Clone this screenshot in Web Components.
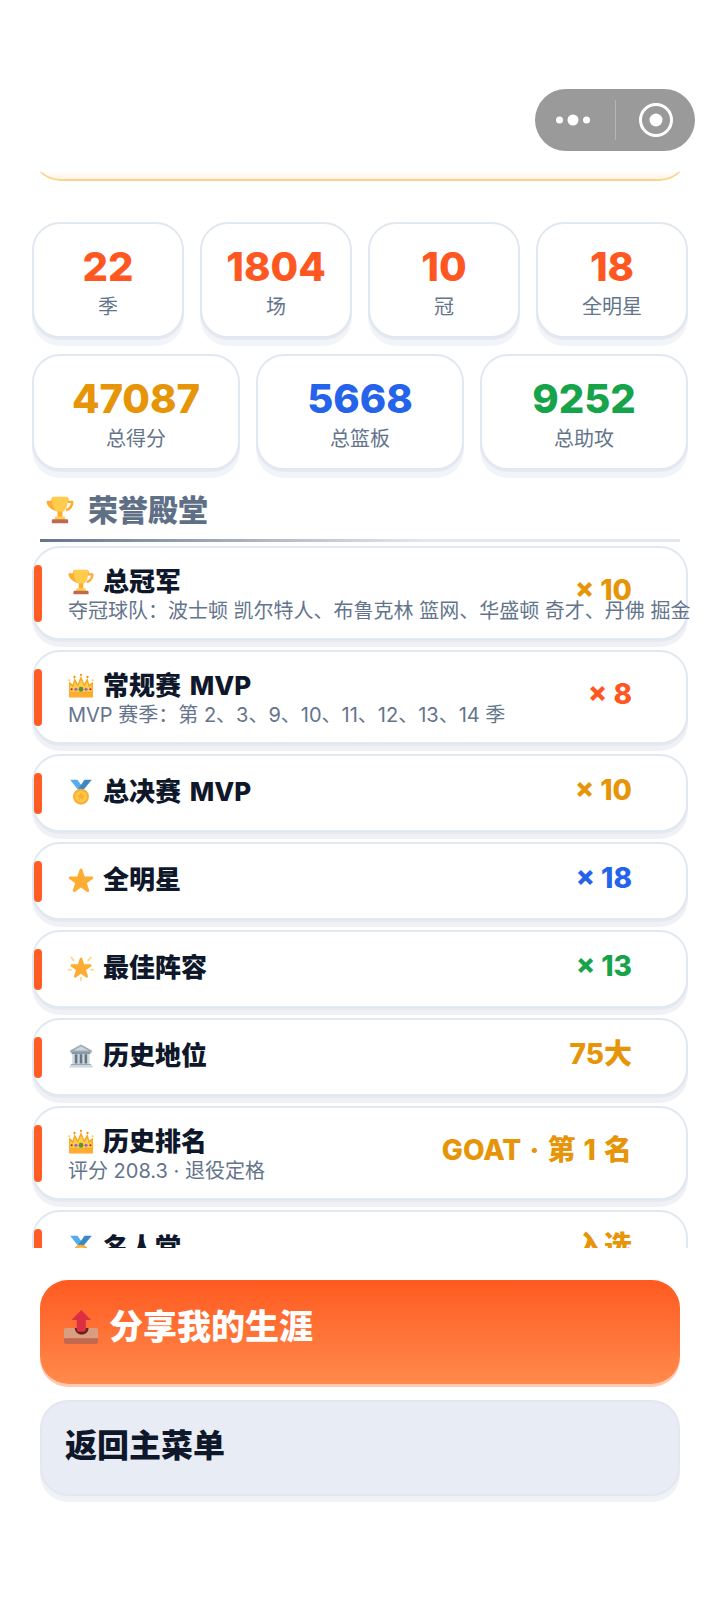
<!DOCTYPE html>
<html lang="zh"><head><meta charset="utf-8"><title>生涯</title>
<style>
html,body{margin:0;padding:0;background:#fff}
body{width:720px;height:1600px;overflow:hidden;font-family:Inter,"Noto Sans CJK SC",sans-serif}
</style></head><body>
<career-page>
  <capsule-menu slot="overlay"></capsule-menu>
  <hero-tail></hero-tail>
  <stat-grid cols="4" style="margin-top:41px">
    <stat-card value="22" label="季" color="#ff5722"></stat-card>
    <stat-card value="1804" label="场" color="#ff5722"></stat-card>
    <stat-card value="10" label="冠" color="#ff5722"></stat-card>
    <stat-card value="18" label="全明星" color="#ff5722"></stat-card>
  </stat-grid>
  <stat-grid cols="3" style="margin-top:16px">
    <stat-card value="47087" label="总得分" color="#e69508"></stat-card>
    <stat-card value="5668" label="总篮板" color="#2563eb"></stat-card>
    <stat-card value="9252" label="总助攻" color="#16a34a"></stat-card>
  </stat-grid>
  <section-heading text="荣誉殿堂"></section-heading>
  <honor-list>
    <honor-row icon="trophy" name="总冠军" value="× 10" color="#e69508" sub="夺冠球队：波士顿 凯尔特人、布鲁克林 篮网、华盛顿 奇才、丹佛 掘金"></honor-row>
    <honor-row icon="crown" name="常规赛 MVP" value="× 8" color="#ff5722" sub="MVP 赛季：第 2、3、9、10、11、12、13、14 季"></honor-row>
    <honor-row icon="medal" name="总决赛 MVP" value="× 10" color="#e69508"></honor-row>
    <honor-row icon="star" name="全明星" value="× 18" color="#2563eb"></honor-row>
    <honor-row icon="glow" name="最佳阵容" value="× 13" color="#16a34a"></honor-row>
    <honor-row icon="bank" name="历史地位" value="75大" color="#e69508"></honor-row>
    <honor-row icon="crown" name="历史排名" value="GOAT · 第 1 名" color="#e69508" wide sub="评分 208.3 · 退役定格"></honor-row>
    <honor-row icon="medal" name="名人堂" value="入选" color="#e69508"></honor-row>
  </honor-list>
  <action-button slot="footer" kind="primary" icon="outbox" text="分享我的生涯"></action-button>
  <action-button slot="footer" kind="secondary" text="返回主菜单"></action-button>
</career-page>
<script>
const STAR='M27.287 34.627c-.404 0-.806-.124-1.152-.371L18 28.422l-8.135 5.834c-.693.496-1.623.496-2.312-.008-.689-.499-.979-1.385-.721-2.194l3.034-9.792-8.062-5.681c-.685-.505-.97-1.393-.708-2.203.264-.808 1.016-1.357 1.866-1.363L12.947 13l3.179-9.549c.268-.809 1.023-1.353 1.874-1.353.851 0 1.606.545 1.875 1.353L23 13l10.036.015c.853.006 1.606.556 1.867 1.363.263.81-.022 1.698-.708 2.203l-8.062 5.681 3.034 9.792c.26.809-.033 1.695-.72 2.194-.347.254-.753.379-1.16.379z';
const ICONS={
trophy:`<path d="M7 3h22v3h4.500c1 0 2 .8 1.900 2-.3 4.500-3 11-9.400 11.500l-.5-3c3.500-.5 6-4 6.500-7.500H8.500c.5 3.500 3 7 6.500 7.500l-.5 3C8 19 1 12.500.7 8 .6 6.800 1.500 6 2.500 6H7z" fill="#ffac33"/><path d="M8 1h20c.6 6-.5 17-7 19.500v6h-6v-6C8.500 18 7.400 7 8 1z" fill="#ffcc4d"/><path d="M15 20h6v8h-6z" fill="#ffac33"/><path d="M12 26.500h12l1 4H11z" fill="#ffcc4d"/><path d="M9 30h18c1 0 1.500.8 1.500 1.800V35h-21v-3.200C7.500 30.800 8 30 9 30z" fill="#c1694f"/>`,
crown:`<path d="M1.500 12l5 4 2.500-9 4.500 8L18 4l4.500 11L27 7l2.500 9 5-4v21h-33z" fill="#f4a91f"/><path d="M3 16l4 4 2.500-8 4 7L18 9l4.500 10 4-7 2.500 8 4-4v10H3z" fill="#ffcc4d"/><path d="M1.500 27h33v7h-33z" fill="#ffac33"/><circle cx="1.800" cy="10" r="1.500" fill="#ffcc4d"/><circle cx="9" cy="5.500" r="1.600" fill="#f4900c"/><circle cx="18" cy="2.500" r="1.600" fill="#f4900c"/><circle cx="27" cy="5.500" r="1.600" fill="#f4900c"/><circle cx="34.200" cy="10" r="1.500" fill="#ffcc4d"/><circle cx="18" cy="22.500" r="3.300" fill="#5c913b"/><circle cx="11" cy="22.500" r="2.100" fill="#9266cc"/><circle cx="25" cy="22.500" r="2.100" fill="#9266cc"/><circle cx="5" cy="22.500" r="1.500" fill="#be1931"/><circle cx="31" cy="22.500" r="1.500" fill="#be1931"/>`,
medal:`<path d="M3 1h10l8 11-4 7z" fill="#55acee"/><path d="M33 1H23l-8 11 3 7z" fill="#3b88c3"/><path d="M13 15h10v6H13z" fill="#ffac33"/><circle cx="18" cy="24.500" r="11" fill="#ffac33"/><circle cx="18" cy="24.500" r="8" fill="#ffcc4d"/><path d="M18 18.500l1.800 4 4.200.3-3.200 2.800 1 4.200-3.800-2.300-3.800 2.300 1-4.200-3.200-2.800 4.200-.3z" fill="#ffac33"/>`,
star:`<path d="${STAR}" fill="#ffac33"/>`,
glow:`<g fill="#ffd983"><path d="M3 3.500l2-1.600 4.500 5.600-2 1.600zM33 3.500l-2-1.600-4.500 5.600 2 1.600zM0 21.500l.2-2.500 5 .4-.2 2.500zM36 21.500l-.2-2.500-5 .4.2 2.500zM16.800 30.500h2.400V36h-2.400z"/></g><g transform="translate(18 17.500) scale(.86) translate(-18 -18.500)"><path d="${STAR}" fill="#ffac33"/></g>`,
bank:`<path d="M18 2L3 10.500V13h30v-2.500z" fill="#99aab5"/><path d="M18 4.500L7.500 10.500h21z" fill="#ccd6dd"/><path d="M5 13h26v2H5z" fill="#66757f"/><path d="M6 15h24v14H6z" fill="#ccd6dd"/><path d="M9.500 15.500h3.500v13H9.500zM16.250 15.500h3.500v13h-3.500zM23 15.500h3.500v13H23z" fill="#66757f"/><path d="M4 29h28v2H4z" fill="#99aab5"/><path d="M2 31h32v3H2z" fill="#ccd6dd"/>`,
outbox:`<path d="M2 19h32c1.100 0 2 .9 2 2v9H0v-9c0-1.100.9-2 2-2z" fill="#d99e82"/><path d="M0 30h36v4c0 1.100-.9 2-2 2H2c-1.100 0-2-.9-2-2z" fill="#c1694f"/><path d="M11.500 19h14.500c0 4-3.200 7-7.250 7s-7.250-3-7.250-7z" fill="#662113"/><path d="M18.300 0L8 10.600h5.500V21c0 1.200.8 2 1.800 2h6c1 0 1.800-.8 1.800-2V10.600h5.500z" fill="#dd2e44"/>`
};
class AppIcon extends HTMLElement{
  static get observedAttributes(){return['name'];}
  constructor(){super();const r=this.attachShadow({mode:'open'});r.innerHTML=`<style>:host{display:inline-flex;flex:none}svg{display:block;width:100%;height:100%}</style><svg viewBox="0 0 36 36" aria-hidden="true"></svg>`;}
  attributeChangedCallback(){this.shadowRoot.querySelector('svg').innerHTML=ICONS[this.getAttribute('name')]||'';}
}
customElements.define('app-icon',AppIcon);
function define(name,html,extra){
  const t=document.createElement('template');t.innerHTML=html;
  customElements.define(name,class extends HTMLElement{
    constructor(){super();this.attachShadow({mode:'open'}).appendChild(t.content.cloneNode(true));}
    connectedCallback(){if(extra)extra(this,this.shadowRoot);}
  });
}
define('career-page',`<style>
:host{display:block;position:relative;width:720px;height:1600px;background:#fff;overflow:hidden}
.wrap{display:flex;flex-direction:column;height:1600px}
.scroll{margin-top:150px;height:1098px;overflow:hidden;flex:none;padding:0 32px;box-sizing:border-box}
.foot{display:flex;flex-direction:column;gap:16px;padding:32px 40px 0}
</style><div class="wrap"><div class="scroll"><slot></slot></div><div class="foot"><slot name="footer"></slot></div></div><slot name="overlay"></slot>`);
define('capsule-menu',`<style>
:host{position:absolute;left:535px;top:89px;width:160px;height:62px;display:block}
.c{height:100%;border-radius:31px;background:#9a9a9a;display:flex;align-items:center}
svg{display:block}
.l{width:80px;box-sizing:border-box;display:flex;justify-content:center;padding-right:4px}
.s{width:1px;height:40px;background:#b5b5b5}
.r{flex:1;display:flex;justify-content:center}
</style><div class="c"><div class="l"><svg width="36" height="14" viewBox="0 0 36 14"><circle cx="4.500" cy="7" r="3.500" fill="#fff"/><circle cx="18" cy="7" r="5.500" fill="#fff"/><circle cx="31.500" cy="7" r="3.500" fill="#fff"/></svg></div><div class="s"></div><div class="r"><svg width="36" height="36" viewBox="0 0 36 36"><circle cx="18" cy="18" r="15.500" fill="none" stroke="#fff" stroke-width="3"/><circle cx="18" cy="18" r="6.500" fill="#fff"/></svg></div></div>`);
define('hero-tail',`<style>
:host{display:block;height:31px;box-sizing:border-box;border:2px solid #fbd18e;border-top:0;border-radius:0 0 28px 28px;background:linear-gradient(#fff calc(100% - 7px),#fff3e0);-webkit-mask-image:linear-gradient(transparent 21px,#000 23px);mask-image:linear-gradient(transparent 21px,#000 23px)}
</style>`);
define('stat-grid',`<style>:host{display:grid;gap:16px}</style><slot></slot>`,(h)=>{h.style.gridTemplateColumns=`repeat(${h.getAttribute('cols')},1fr)`;});
define('stat-card',`<style>
:host{display:flex;flex-direction:column;align-items:center;height:116px;box-sizing:border-box;background:#fff;border:2px solid #e2e8f0;border-radius:28px;box-shadow:0 2px 0 #e5e9f0,0 8px 0 #f1f4f8;padding-top:19px}
.v{font-size:40px;font-weight:800;line-height:48px}
.l{font-size:20px;line-height:28px;color:#64748b;margin-top:2px}
</style><div class="v"></div><div class="l"></div>`,(h,s)=>{const v=s.querySelector('.v');v.textContent=h.getAttribute('value');v.style.color=h.getAttribute('color');s.querySelector('.l').textContent=h.getAttribute('label');});
define('section-heading',`<style>
:host{display:block;margin:12px 8px 0}
.t{display:flex;align-items:center;height:56px;padding:0 0 1px 6px}
app-icon{width:28px;height:28px;margin-right:14px}
span{font-size:30px;font-weight:800;color:#5f6f86;line-height:40px}
.d{height:3px;background:linear-gradient(90deg,#64748b,#e2e8f0 60%,#e2e8f0)}
</style><div class="t"><app-icon name="trophy"></app-icon><span></span></div><div class="d"></div>`,(h,s)=>{s.querySelector('span').textContent=h.getAttribute('text');});
define('honor-list',`<style>:host{display:flex;flex-direction:column;gap:10px;margin-top:4px}</style><slot></slot>`);
define('honor-row',`<style>
:host{display:block;position:relative;flex:none;box-sizing:border-box;background:#fff;border:2px solid #e2e8f0;border-radius:28px;box-shadow:0 2px 0 #e5e9f0,0 7px 0 #eff1f6;padding:17px 54px 15px 34px}
.bar{position:absolute;left:0;top:17px;bottom:16px;width:8px;border-radius:4px;background:#ff5d24}
.row{display:flex;align-items:center}
.txt{flex:1;width:0;min-width:0;min-height:42px}
.name{display:flex;align-items:center;height:34px;white-space:nowrap}
app-icon{width:26px;height:26px;margin-right:9px}
b{font-size:26px;font-weight:800;color:#0f172a;line-height:34px;word-spacing:3px}
.sub{font-size:20px;line-height:24px;color:#64748b;white-space:nowrap}
.val{position:relative;font-size:28px;font-weight:800;line-height:32px;white-space:nowrap;margin-bottom:9px;flex:none}
</style><div class="bar"></div><div class="row"><div class="txt"><div class="name"><app-icon></app-icon><b></b></div><div class="sub"></div></div><div class="val"></div></div>`,(h,s)=>{
  s.querySelector('app-icon').setAttribute('name',h.getAttribute('icon'));
  s.querySelector('b').textContent=h.getAttribute('name');
  const sub=s.querySelector('.sub');
  if(h.hasAttribute('sub'))sub.textContent=h.getAttribute('sub');
  else{sub.remove();s.querySelector('.name').style.marginTop='2px';}
  const v=s.querySelector('.val');v.textContent=h.getAttribute('value');v.style.color=h.getAttribute('color');
  if(h.hasAttribute('wide'))v.style.wordSpacing='2px';
});
define('action-button',`<style>
:host{display:flex;align-items:center;box-sizing:border-box;border-radius:28px;padding-left:24px}
:host([kind=primary]){height:104px;background:linear-gradient(#ff5a20,#ff8a4c);box-shadow:0 3px 0 #ffc9b0;color:#fff;font-size:34px;padding-bottom:10px}
:host([kind=secondary]){height:96px;background:#e8ecf4;border:2px solid #e2e8f0;box-shadow:0 6px 0 #f0f2f6;color:#0f172a;font-size:32px;padding-left:23px;padding-bottom:4px}
app-icon{width:34px;height:34px;margin-right:11px}
span{font-weight:800;line-height:44px}
</style><app-icon></app-icon><span></span>`,(h,s)=>{const i=s.querySelector('app-icon');if(h.hasAttribute('icon'))i.setAttribute('name',h.getAttribute('icon'));else i.remove();s.querySelector('span').textContent=h.getAttribute('text');});
</script>
</body></html>
